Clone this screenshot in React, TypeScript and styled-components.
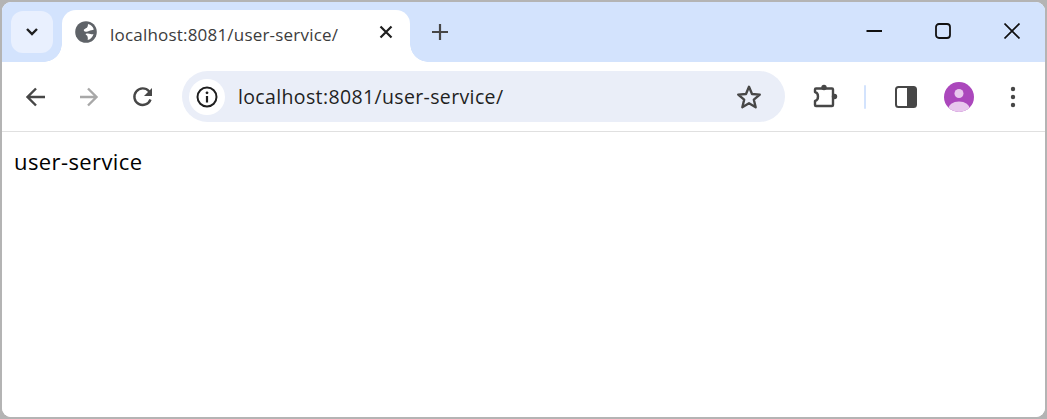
import React from 'react'
import styled, { createGlobalStyle } from 'styled-components'

const Global = createGlobalStyle`
    html, body { margin: 0; padding: 0; background: #b4b4b4; }
    body { font-family: 'Open Sans', 'Noto Sans', sans-serif; }
`
const Window = styled.div`
    width: 1047px;
    height: 419px;
    box-sizing: border-box;
    border: 2px solid #b4b4b4;
    border-radius: 11px;
    overflow: hidden;
    display: flex;
    flex-direction: column;
    background: #fff;
`
const TabStrip = styled.div`
    height: 60px;
    flex-shrink: 0;
    display: flex;
    align-items: flex-start;
    background: #d3e3fd;
    padding-left: 9px;
`
const TabSearch = styled.button`
    width: 42px;
    height: 42px;
    margin-top: 9px;
    padding: 0;
    border: none;
    border-radius: 12px;
    background: #e9f0fe;
    display: flex;
    align-items: center;
    justify-content: center;
`
const Tab = styled.div`
    position: relative;
    width: 348px;
    height: 52px;
    margin: 8px 0 0 9px;
    box-sizing: border-box;
    padding: 0 17px 8px 13px;
    display: flex;
    align-items: center;
    background: #fff;
    border-radius: 14px 14px 0 0;

    &::before, &::after {
        content: '';
        position: absolute;
        bottom: 0;
        width: 18px;
        height: 18px;
    }
    &::before { left: -18px; background: radial-gradient(circle at 0 0, transparent 17.5px, #fff 18px); }
    &::after { right: -18px; background: radial-gradient(circle at 100% 0, transparent 17.5px, #fff 18px); }
`
const TabTitle = styled.span`
    margin: 4px 0 0 13px;
    flex: 1;
    font-size: 17px;
    letter-spacing: 0.2px;
    color: #3c3c3c;
    white-space: nowrap;
`
const NewTab = styled.div`
    margin: 22px 0 0 22px;
    height: 16px;
    display: flex;
`
const WindowControls = styled.div`
    margin-left: auto;
    margin-top: 21px;
    display: flex;
    gap: 53px;
    padding-right: 25px;
`
const Toolbar = styled.div`
    height: 69px;
    flex-shrink: 0;
    box-sizing: border-box;
    display: flex;
    align-items: center;
    background: #fff;
    border-radius: 11px 11px 0 0;
    padding: 0 0 0 21px;
`
const ToolbarRule = styled.div`
    height: 1px;
    flex-shrink: 0;
    background: #e0e0e0;
`
const NavIcons = styled.div`
    display: flex;
    gap: 30px;
`
const Omnibox = styled.div`
    width: 603px;
    height: 51px;
    margin-left: 27px;
    box-sizing: border-box;
    padding: 0 22px 0 7px;
    display: flex;
    align-items: center;
    background: #eaeef8;
    border-radius: 26px;
`
const InfoBadge = styled.div`
    width: 36px;
    height: 36px;
    border-radius: 50%;
    background: #fff;
    display: flex;
    align-items: center;
    justify-content: center;
`
const Url = styled.span`
    margin-left: 13px;
    flex: 1;
    font-size: 19.5px;
    letter-spacing: 0.36px;
    color: #1f1f1f;
    white-space: nowrap;
`
const Actions = styled.div`
    display: flex;
    align-items: center;
    margin-left: 27px;
`
const Separator = styled.div`
    width: 2px;
    height: 24px;
    margin: 0 29px 0 26px;
    background: #d3e3fd;
    border-radius: 1px;
`
const Avatar = styled.div`
    margin: 0 36px 0 27px;
    height: 30px;
    display: flex;
`
const Page = styled.main`
    flex: 1;
    padding: 14px 12px;
    font-size: 22px;
    letter-spacing: 0.4px;
    line-height: 30px;
    color: #000;
    background: #fff;
`

const dark = '#474747'

export default function App() {
    return (
        <>
            <Global />
            <Window>
                <TabStrip>
                    <TabSearch>
                        <svg width="14" height="10" viewBox="0 0 14 10">
                            <path d="M2 2l5 5 5-5" fill="none" stroke="#1f1f1f" strokeWidth="2.4" />
                        </svg>
                    </TabSearch>
                    <Tab>
                        <svg width="22" height="22" viewBox="0 0 22 22">
                            <circle cx="11" cy="11" r="10.800" fill="#5f6368" />
                            <path d="M13 3c3 .6 5 2.800 5.800 5.500-1.500 1-3.300.7-4.800 1.500-1.500.7-2.500 1.200-4 .6-1-.4-1.500-1.200-1-2 .8-1 3-1.300 3.500-2.800.2-.9.600-1.800.5-2.800z" fill="#fff" />
                            <path d="M10.500 13c1.700-.8 3.500-.5 5 0 1 .3 2 .3 3 0-.7 3-2.800 5.300-5.800 6 .3-1.500.2-2.800-.3-3.800-.4-.9-1.300-1.200-1.900-2.200z" fill="#fff" />
                        </svg>
                        <TabTitle>localhost:8081/user-service/</TabTitle>
                        <svg width="14" height="14" viewBox="0 0 14 14">
                            <path d="M1.500 1.500l11 11M12.500 1.500l-11 11" stroke="#1f1f1f" strokeWidth="2.200" fill="none" />
                        </svg>
                    </Tab>
                    <NewTab>
                        <svg width="16" height="16" viewBox="0 0 16 16">
                            <path d="M8 0v16M0 8h16" stroke={dark} strokeWidth="2.200" fill="none" />
                        </svg>
                    </NewTab>
                    <WindowControls>
                        <svg width="16" height="16" viewBox="0 0 16 16">
                            <path d="M.5 8h15.500" stroke="#111" strokeWidth="1.800" fill="none" />
                        </svg>
                        <svg width="16" height="16" viewBox="0 0 16 16">
                            <rect x="1" y="1" width="14" height="14" rx="3" stroke="#111" strokeWidth="1.800" fill="none" />
                        </svg>
                        <svg width="16" height="16" viewBox="0 0 16 16">
                            <path d="M.5.500l15 15M15.500.500l-15 15" stroke="#111" strokeWidth="1.700" fill="none" />
                        </svg>
                    </WindowControls>
                </TabStrip>
                <Toolbar>
                    <NavIcons>
                        <svg width="24" height="24" viewBox="0 0 24 24">
                            <path d="M22 12H5M13 3.500 4.500 12l8.500 8.500" stroke={dark} strokeWidth="2.400" fill="none" />
                        </svg>
                        <svg width="24" height="24" viewBox="0 0 24 24">
                            <path d="M3 12h16M11 3.500l8.500 8.500-8.500 8.500" stroke="#a8a8a8" strokeWidth="2.400" fill="none" />
                        </svg>
                        <svg width="24" height="24" viewBox="0 0 24 24">
                            <path d="M19.500 14.500A8.300 8.300 0 1 1 18 6.300l1.500 2" stroke={dark} strokeWidth="2.400" fill="none" />
                            <path d="M21 3v8h-8z" fill={dark} />
                        </svg>
                    </NavIcons>
                    <Omnibox>
                        <InfoBadge>
                            <svg width="22" height="22" viewBox="0 0 22 22">
                                <circle cx="11" cy="11" r="9.500" stroke="#1f1f1f" strokeWidth="2" fill="none" />
                                <path d="M11 10v6.500" stroke="#1f1f1f" strokeWidth="2.200" />
                                <circle cx="11" cy="6.800" r="1.400" fill="#1f1f1f" />
                            </svg>
                        </InfoBadge>
                        <Url>localhost:8081/user-service/</Url>
                        <svg width="28" height="28" viewBox="0 0 26 26">
                            <path d="M13 3.500l2.800 6.700 7.200.6-5.500 4.700 1.700 7-6.200-3.700-6.200 3.700 1.700-7L3 10.800l7.200-.6z" stroke={dark} strokeWidth="2.200" strokeLinejoin="round" fill="none" />
                        </svg>
                    </Omnibox>
                    <Actions>
                        <svg width="26" height="26" viewBox="0 0 26 26">
                            <path d="M4 4.500H20a1 1 0 0 1 1 1V21a1 1 0 0 1-1 1H4a1 1 0 0 1-1-1V17c2.500-.5 3-2 3-4.500S5 8.500 3 8V5.500a1 1 0 0 1 1-1z" stroke={dark} strokeWidth="2.400" strokeLinejoin="round" fill="none" />
                            <circle cx="12" cy="3.500" r="2.700" fill={dark} />
                            <circle cx="22.500" cy="12.500" r="2.700" fill={dark} />
                        </svg>
                        <Separator />
                        <svg width="22" height="22" viewBox="0 0 22 22">
                            <rect x="1" y="1" width="20" height="20" rx="2.500" stroke={dark} strokeWidth="2" fill="#fff" />
                            <path d="M12 1h7a2 2 0 0 1 2 2v16a2 2 0 0 1-2 2h-7z" fill={dark} />
                        </svg>
                        <Avatar>
                            <svg width="30" height="30" viewBox="0 0 30 30">
                                <defs>
                                    <clipPath id="avatarClip"><circle cx="15" cy="15" r="15" /></clipPath>
                                </defs>
                                <circle cx="15" cy="15" r="15" fill="#ab47bc" />
                                <g clipPath="url(#avatarClip)" fill="#e8c7ed">
                                    <circle cx="15" cy="11.500" r="4.500" />
                                    <ellipse cx="15" cy="27.500" rx="11" ry="8" />
                                </g>
                            </svg>
                        </Avatar>
                        <svg width="6" height="24" viewBox="0 0 6 24">
                            <circle cx="3" cy="4" r="2.200" fill={dark} />
                            <circle cx="3" cy="12" r="2.200" fill={dark} />
                            <circle cx="3" cy="20" r="2.200" fill={dark} />
                        </svg>
                    </Actions>
                </Toolbar>
                <ToolbarRule />
                <Page>user-service</Page>
            </Window>
        </>
    )
}
